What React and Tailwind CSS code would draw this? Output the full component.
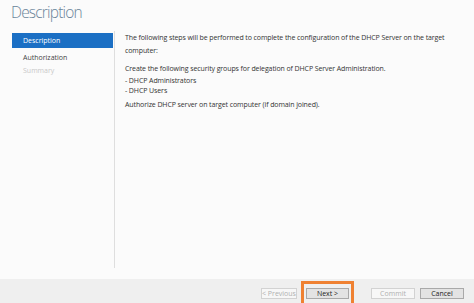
export default function App() {
  const font = { fontFamily: '"Open Sans", "Noto Sans", sans-serif' };
  return (
    <div
      className="w-[474px] h-[303px] bg-[#fbfbfb] flex flex-col overflow-hidden text-[#2b2b2b]"
      style={font}
    >
      <div className="pl-[11px] h-[31px] text-[15.5px] leading-[24px] font-light tracking-[-0.8px] text-[#6a8499]">
        Description
      </div>
      <div className="flex flex-1 min-h-0">
        <div className="w-[114px] pl-[12px] pt-[2px] flex flex-col">
          <div className="h-[15px] w-[101px] bg-[#1b6fc4] text-white text-[7px] leading-[15px] pl-[11px]">
            Description
          </div>
          <div className="h-[11px] mt-[4px] text-[7px] leading-[11px] pl-[11px] text-[#444]">
            Authorization
          </div>
          <div className="h-[11px] mt-[2px] text-[7px] leading-[11px] pl-[11px] text-[#c8c8c8]">
            Summary
          </div>
        </div>
        <div className="flex-1 flex flex-col">
          <div className="h-[237px] border-l border-[#dedede] pl-[10px] pr-[14px] text-[7px] leading-[13px] tracking-[-0.1px] text-[#333]">
            <p>
              The following steps will be performed to complete the configuration of the DHCP Server on the target computer:
            </p>
            <p className="mt-[5px]">
              Create the following security groups for delegation of DHCP Server Administration.
            </p>
            <p className="leading-[11px]">- DHCP Administrators</p>
            <p className="leading-[10px]">- DHCP Users</p>
            <p className="mt-[2px] leading-[13px]">Authorize DHCP server on target computer (if domain joined).</p>
          </div>
        </div>
      </div>
      <div className="h-[24px] shrink-0 bg-[#efefef] flex items-start justify-end pr-[10px] text-[7px]">
        <div className="mt-[9px] h-[11px] w-[36px] border border-[#d2d2d2] bg-[#f7f7f7] text-[#b0b0b0] flex items-center justify-center leading-none">
          &lt; Previous
        </div>
        <div className="ml-[4px] mt-[2px] h-[22px] border-[3px] border-b-0 border-[#ef8132] px-[2px] pt-[4px]">
          <div className="h-[11px] w-[43px] border border-[#a9a9a9] bg-[#e3e3e3] text-[#222] flex items-center justify-center leading-none">
            Next &gt;
          </div>
        </div>
        <div className="ml-[17px] mt-[9px] h-[11px] w-[44px] border border-[#d2d2d2] bg-[#f7f7f7] text-[#b0b0b0] flex items-center justify-center leading-none">
          Commit
        </div>
        <div className="ml-[5px] mt-[9px] h-[11px] w-[44px] border border-[#a9a9a9] bg-[#e3e3e3] text-[#222] flex items-center justify-center leading-none">
          Cancel
        </div>
      </div>
    </div>
  );
}
